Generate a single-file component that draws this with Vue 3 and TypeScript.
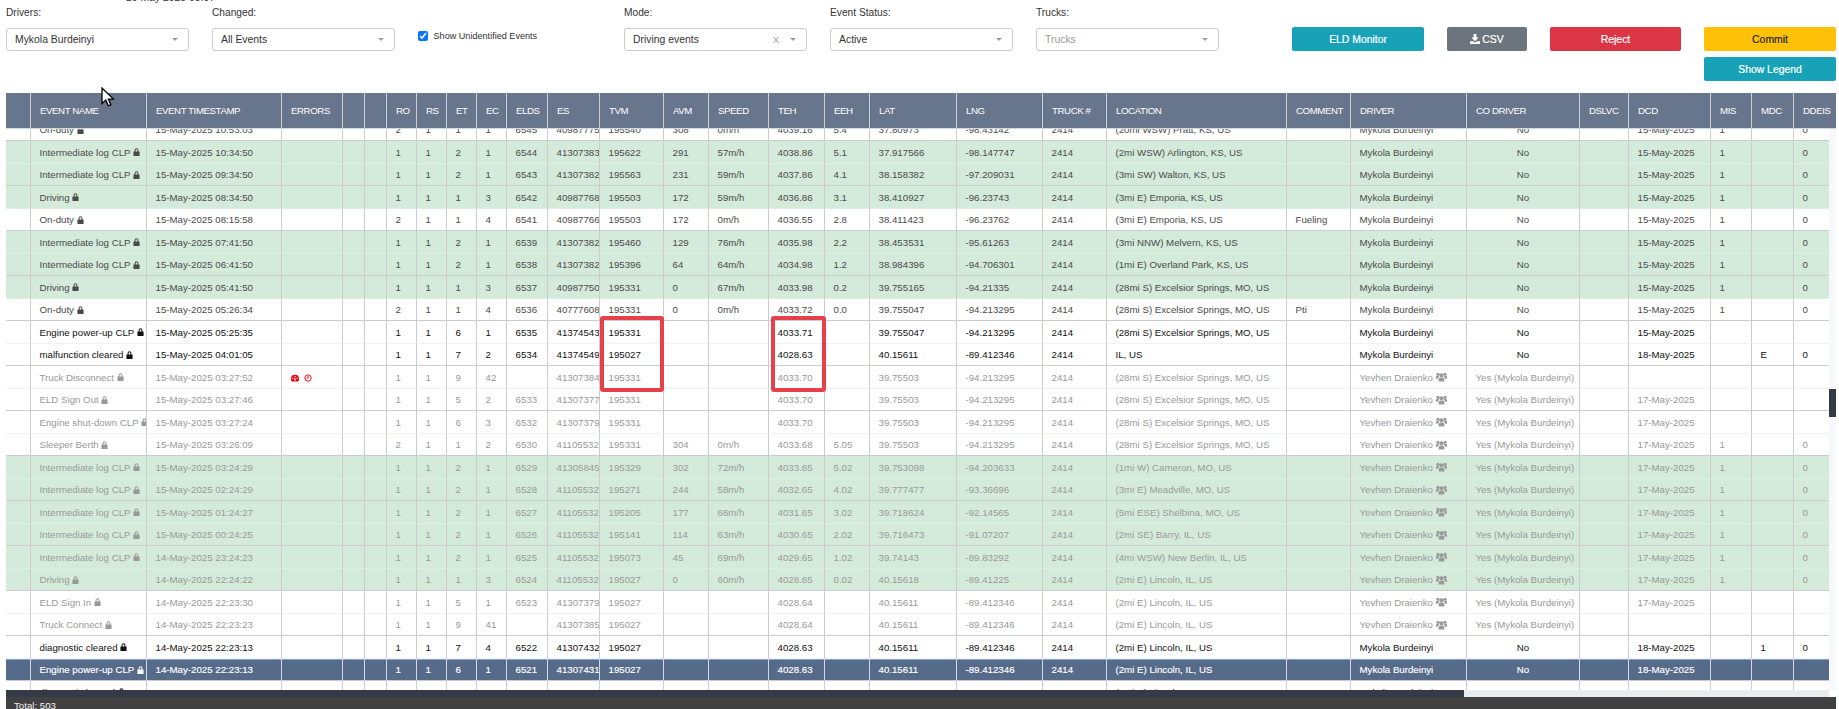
<template>
  <div class="page">
    <span class="report-date">20 May 2025 05:07</span>

    <div class="filters">
      <div class="filter">
        <label class="filter-label">Drivers:</label>
        <div class="select"><span class="select-text">Mykola Burdeinyi</span><i class="caret"></i></div>
      </div>
      <div class="filter">
        <label class="filter-label">Changed:</label>
        <div class="select"><span class="select-text">All Events</span><i class="caret"></i></div>
      </div>
      <div class="filter">
        <label class="check-row"><input type="checkbox" checked class="check" /> Show Unidentified Events</label>
      </div>
      <div class="filter">
        <label class="filter-label">Mode:</label>
        <div class="select">
          <span class="select-text">Driving events</span><span class="clear">X</span><i class="caret"></i>
        </div>
      </div>
      <div class="filter">
        <label class="filter-label">Event Status:</label>
        <div class="select"><span class="select-text">Active</span><i class="caret"></i></div>
      </div>
      <div class="filter">
        <label class="filter-label">Trucks:</label>
        <div class="select"><span class="select-text placeholder">Trucks</span><i class="caret"></i></div>
      </div>

      <div class="actions">
        <button class="btn btn-info eld">ELD Monitor</button>
        <button class="btn btn-gray csv">
          <svg class="dl-icon" viewBox="0 0 14 14"><path d="M5 0h4v5h3L7 10 2 5h3zM0 10h4l3 2 3-2h4v4H0z" /></svg>CSV
        </button>
        <button class="btn btn-red reject">Reject</button>
        <div class="btn-stack">
          <button class="btn btn-yellow">Commit</button>
          <button class="btn btn-info">Show Legend</button>
        </div>
      </div>
    </div>

    <div class="grid">
      <table class="head-table">
        <colgroup>
          <col v-for="(w, i) in headWidths" :key="i" :style="{ width: w + 'px' }" />
        </colgroup>
        <thead>
          <tr>
            <th v-for="(h, i) in headers" :key="i">{{ h }}</th>
          </tr>
        </thead>
      </table>

      <div class="body-wrap">
        <div class="rows">
          <table class="body-table">
            <colgroup>
              <col v-for="(w, i) in bodyWidths" :key="i" :style="{ width: w + 'px' }" />
            </colgroup>
            <tbody>
              <tr v-for="r in rows" :key="r[2] + r[1]" :class="r[0]">
                <td></td>
                <td>
                  {{ r[1] }}
                  <svg class="lock" viewBox="0 0 12 14">
                    <path
                      fill-rule="evenodd"
                      d="M2.6 6V4a3.4 3.4 0 0 1 6.8 0v2h1a1 1 0 0 1 1 1v6a1 1 0 0 1-1 1H1.6a1 1 0 0 1-1-1V7a1 1 0 0 1 1-1zm1.8 0h3.2V4a1.6 1.6 0 0 0-3.2 0z"
                    />
                  </svg>
                </td>
                <td>{{ r[2] }}</td>
                <td>
                  <template v-if="r[1] === 'Truck Disconnect'">
                    <svg class="err-gauge" viewBox="0 0 14 12">
                      <path
                        fill-rule="evenodd"
                        d="M0 7.500a7 7 0 0 1 14 0c0 1.700-.4 3.200-1 4.500H1C.4 10.700 0 9.200 0 7.500zM6 2.600v1.800h2V2.600zM2.300 5.600v1.800h2V5.600zm7.400 0v1.800h2V5.600zM6.200 6l-.6 4.200h2.800L7.800 6z"
                      />
                    </svg>
                    <svg class="err-clock" viewBox="0 0 12 12">
                      <circle cx="6" cy="6" r="4.800" />
                      <path d="M6 3v3.200H3.600" />
                    </svg>
                  </template>
                </td>
                <td></td>
                <td></td>
                <td>{{ r[3] }}</td>
                <td>{{ r[4] }}</td>
                <td>{{ r[5] }}</td>
                <td>{{ r[6] }}</td>
                <td>{{ r[7] }}</td>
                <td>{{ r[8] }}</td>
                <td>{{ r[9] }}</td>
                <td>{{ r[10] }}</td>
                <td>{{ r[11] }}</td>
                <td>{{ r[12] }}</td>
                <td>{{ r[13] }}</td>
                <td>{{ r[14] }}</td>
                <td>{{ r[15] }}</td>
                <td>2414</td>
                <td>{{ r[16] }}</td>
                <td>{{ r[17] }}</td>
                <td>
                  {{ r[18] }}
                  <svg v-if="r[19] !== 'No'" class="users" viewBox="0 0 16 14">
                    <circle cx="8" cy="4.400" r="2.900" />
                    <circle cx="2.900" cy="3" r="2.300" />
                    <circle cx="13.100" cy="3" r="2.300" />
                    <path d="M3.800 13.500v-3c0-1.800 1.300-2.900 2.700-2.900h3c1.400 0 2.700 1.100 2.700 2.900v3z" />
                    <path d="M0 9.600V7c0-1 .7-1.800 1.800-1.800h2.100c.2.900.6 1.500 1.200 1.900-1.500.4-2.400 1.300-2.700 2.500zM16 9.600V7c0-1-.7-1.800-1.800-1.800h-2.100c-.2.900-.6 1.500-1.200 1.900 1.500.4 2.400 1.300 2.700 2.500z" />
                  </svg>
                </td>
                <td :class="{ center: r[19] === 'No' }">{{ r[19] }}</td>
                <td></td>
                <td>{{ r[20] }}</td>
                <td>{{ r[21] }}</td>
                <td>{{ r[22] }}</td>
                <td>{{ r[23] }}</td>
              </tr>
            </tbody>
          </table>
        </div>
        <div class="vscroll"><div class="vthumb"></div></div>
      </div>

      <!-- review marks drawn over the table -->
      <div class="mark mark-tvm"></div>
      <div class="mark mark-teh"></div>
    </div>

    <div class="hscroll"><div class="hthumb"></div><div class="htrack"></div></div>
    <div class="footer">Total: 503</div>

    <svg class="cursor" viewBox="0 0 14 20">
      <path d="M1 1v15.500l3.800-3.500 2.500 5.800 2.600-1.100-2.500-5.600h5.100z" />
    </svg>
  </div>
</template>

<script setup lang="ts">
type Row = [string, ...string[]]

const headers = [
  '', 'EVENT NAME', 'EVENT TIMESTAMP', 'ERRORS', '', '', 'RO', 'RS', 'ET', 'EC', 'ELDS', 'ES', 'TVM', 'AVM',
  'SPEED', 'TEH', 'EEH', 'LAT', 'LNG', 'TRUCK #', 'LOCATION', 'COMMENT', 'DRIVER', 'CO DRIVER', 'DSLVC', 'DCD',
  'MIS', 'MDC', 'DDEIS',
]

const bodyWidths = [
  25, 116, 135, 61, 22, 22, 30, 30, 30, 30, 41, 52, 64, 45, 60, 56, 45, 87, 86, 64, 180, 64, 116, 113, 49, 82, 41,
  42, 35,
]
const headWidths = [...bodyWidths.slice(0, -1), 42]

const MB = 'Mykola Burdeinyi'
const YD = 'Yevhen Draienko'
const YM = 'Yes (Mykola Burdeinyi)'
const EXC = '(28mi S) Excelsior Springs, MO, US'
const LIN = '(2mi E) Lincoln, IL, US'
const ILOG = 'Intermediate log CLP'

// class, name, time, ro, rs, et, ec, elds, es, tvm, avm, speed, teh, eeh, lat, lng, location, comment, driver, co, dcd, mis, mdc, ddeis
const rows: Row[] = [
  ['', 'On-duty', '15-May-2025 10:53:03', '2', '1', '1', '1', '6545', '40987775', '195540', '308', '0m/h', '4039.16', '5.4', '37.80973', '-98.43142', '(20mi WSW) Pratt, KS, US', '', MB, 'No', '15-May-2025', '1', '', '0'],
  ['green', ILOG, '15-May-2025 10:34:50', '1', '1', '2', '1', '6544', '41307383', '195622', '291', '57m/h', '4038.86', '5.1', '37.917566', '-98.147747', '(2mi WSW) Arlington, KS, US', '', MB, 'No', '15-May-2025', '1', '', '0'],
  ['green', ILOG, '15-May-2025 09:34:50', '1', '1', '2', '1', '6543', '41307382', '195563', '231', '59m/h', '4037.86', '4.1', '38.158382', '-97.209031', '(3mi SW) Walton, KS, US', '', MB, 'No', '15-May-2025', '1', '', '0'],
  ['green', 'Driving', '15-May-2025 08:34:50', '1', '1', '1', '3', '6542', '40987768', '195503', '172', '59m/h', '4036.86', '3.1', '38.410927', '-96.23743', '(3mi E) Emporia, KS, US', '', MB, 'No', '15-May-2025', '1', '', '0'],
  ['', 'On-duty', '15-May-2025 08:15:58', '2', '1', '1', '4', '6541', '40987766', '195503', '172', '0m/h', '4036.55', '2.8', '38.411423', '-96.23762', '(3mi E) Emporia, KS, US', 'Fueling', MB, 'No', '15-May-2025', '1', '', '0'],
  ['green', ILOG, '15-May-2025 07:41:50', '1', '1', '2', '1', '6539', '41307382', '195460', '129', '76m/h', '4035.98', '2.2', '38.453531', '-95.61263', '(3mi NNW) Melvern, KS, US', '', MB, 'No', '15-May-2025', '1', '', '0'],
  ['green', ILOG, '15-May-2025 06:41:50', '1', '1', '2', '1', '6538', '41307382', '195396', '64', '64m/h', '4034.98', '1.2', '38.984396', '-94.706301', '(1mi E) Overland Park, KS, US', '', MB, 'No', '15-May-2025', '1', '', '0'],
  ['green', 'Driving', '15-May-2025 05:41:50', '1', '1', '1', '3', '6537', '40987750', '195331', '0', '67m/h', '4033.98', '0.2', '39.755165', '-94.21335', EXC, '', MB, 'No', '15-May-2025', '1', '', '0'],
  ['', 'On-duty', '15-May-2025 05:26:34', '2', '1', '1', '4', '6536', '40777608', '195331', '0', '0m/h', '4033.72', '0.0', '39.755047', '-94.213295', EXC, 'Pti', MB, 'No', '15-May-2025', '1', '', '0'],
  ['strong', 'Engine power-up CLP', '15-May-2025 05:25:35', '1', '1', '6', '1', '6535', '41374543', '195331', '', '', '4033.71', '', '39.755047', '-94.213295', EXC, '', MB, 'No', '15-May-2025', '', '', ''],
  ['strong', 'malfunction cleared', '15-May-2025 04:01:05', '1', '1', '7', '2', '6534', '41374549', '195027', '', '', '4028.63', '', '40.15611', '-89.412346', 'IL, US', '', MB, 'No', '18-May-2025', '', 'E', '0'],
  ['dim', 'Truck Disconnect', '15-May-2025 03:27:52', '1', '1', '9', '42', '', '41307384', '195331', '', '', '4033.70', '', '39.75503', '-94.213295', EXC, '', YD, YM, '', '', '', ''],
  ['dim', 'ELD Sign Out', '15-May-2025 03:27:46', '1', '1', '5', '2', '6533', '41307377', '195331', '', '', '4033.70', '', '39.75503', '-94.213295', EXC, '', YD, YM, '17-May-2025', '', '', ''],
  ['dim', 'Engine shut-down CLP', '15-May-2025 03:27:24', '1', '1', '6', '3', '6532', '41307379', '195331', '', '', '4033.70', '', '39.75503', '-94.213295', EXC, '', YD, YM, '17-May-2025', '', '', ''],
  ['dim', 'Sleeper Berth', '15-May-2025 03:26:09', '2', '1', '1', '2', '6530', '41105532', '195331', '304', '0m/h', '4033.68', '5.05', '39.75503', '-94.213295', EXC, '', YD, YM, '17-May-2025', '1', '', '0'],
  ['green dim', ILOG, '15-May-2025 03:24:29', '1', '1', '2', '1', '6529', '41305845', '195329', '302', '72m/h', '4033.65', '5.02', '39.753098', '-94.203633', '(1mi W) Cameron, MO, US', '', YD, YM, '17-May-2025', '1', '', '0'],
  ['green dim', ILOG, '15-May-2025 02:24:29', '1', '1', '2', '1', '6528', '41105532', '195271', '244', '58m/h', '4032.65', '4.02', '39.777477', '-93.36696', '(3mi E) Meadville, MO, US', '', YD, YM, '17-May-2025', '1', '', '0'],
  ['green dim', ILOG, '15-May-2025 01:24:27', '1', '1', '2', '1', '6527', '41105532', '195205', '177', '66m/h', '4031.65', '3.02', '39.718624', '-92.14565', '(5mi ESE) Shelbina, MO, US', '', YD, YM, '17-May-2025', '1', '', '0'],
  ['green dim', ILOG, '15-May-2025 00:24:25', '1', '1', '2', '1', '6526', '41105532', '195141', '114', '63m/h', '4030.65', '2.02', '39.716473', '-91.07207', '(2mi SE) Barry, IL, US', '', YD, YM, '17-May-2025', '1', '', '0'],
  ['green dim', ILOG, '14-May-2025 23:24:23', '1', '1', '2', '1', '6525', '41105532', '195073', '45', '69m/h', '4029.65', '1.02', '39.74143', '-89.83292', '(4mi WSW) New Berlin, IL, US', '', YD, YM, '17-May-2025', '1', '', '0'],
  ['green dim', 'Driving', '14-May-2025 22:24:22', '1', '1', '1', '3', '6524', '41105532', '195027', '0', '60m/h', '4028.65', '0.02', '40.15618', '-89.41225', LIN, '', YD, YM, '17-May-2025', '1', '', '0'],
  ['dim', 'ELD Sign In', '14-May-2025 22:23:30', '1', '1', '5', '1', '6523', '41307379', '195027', '', '', '4028.64', '', '40.15611', '-89.412346', LIN, '', YD, YM, '17-May-2025', '', '', ''],
  ['dim', 'Truck Connect', '14-May-2025 22:23:23', '1', '1', '9', '41', '', '41307385', '195027', '', '', '4028.64', '', '40.15611', '-89.412346', LIN, '', YD, YM, '', '', '', ''],
  ['strong', 'diagnostic cleared', '14-May-2025 22:23:13', '1', '1', '7', '4', '6522', '41307432', '195027', '', '', '4028.63', '', '40.15611', '-89.412346', LIN, '', MB, 'No', '18-May-2025', '', '1', '0'],
  ['selected', 'Engine power-up CLP', '14-May-2025 22:23:13', '1', '1', '6', '1', '6521', '41307431', '195027', '', '', '4028.63', '', '40.15611', '-89.412346', LIN, '', MB, 'No', '18-May-2025', '', '', ''],
  ['strong', 'diagnostic logged', '14-May-2025 22:23:05', '1', '1', '7', '3', '6520', '41307430', '195027', '', '', '4028.63', '', '40.15611', '-89.412346', LIN, '', MB, 'No', '18-May-2025', '', '1', '0'],
]
</script>

<style>
html,
body {
  margin: 0;
  overflow: hidden;
  background: #fff;
}
</style>

<style scoped>
.page {
  position: relative;
  display: flex;
  flex-direction: column;
  height: 709px;
  padding: 0 3px 0 6px;
  box-sizing: border-box;
  overflow: hidden;
  font-family: 'Liberation Sans', Arial, sans-serif;
  color: #333;
}

.report-date {
  position: absolute;
  left: 126px;
  top: -8px;
  font-size: 10.400px;
  line-height: 12px;
}

/* top filter bar */
.filters {
  display: flex;
  flex: none;
  height: 93px;
  box-sizing: border-box;
  padding-top: 7px;
}

.filter {
  width: 183px;
  margin-right: 23px;
  flex: none;
}

.filter-label {
  display: block;
  height: 12px;
  margin-bottom: 9px;
  font-size: 10.200px;
  line-height: 12px;
  color: #333;
}

.select {
  display: flex;
  align-items: center;
  height: 23px;
  box-sizing: border-box;
  padding: 0 10px 0 8px;
  border: 1px solid #ccc;
  border-radius: 3px;
  background: #fff;
  font-size: 10.400px;
}

.select-text {
  flex: 1;
}

.placeholder {
  color: #999;
}

.clear {
  margin-right: 11px;
  font-size: 9px;
  color: #999;
}

.caret {
  width: 0;
  height: 0;
  border-left: 3px solid transparent;
  border-right: 3px solid transparent;
  border-top: 3px solid #999;
}

.check-row {
  display: flex;
  align-items: center;
  margin-top: 24px;
  font-size: 9.100px;
  line-height: 10px;
  white-space: pre;
}

.check {
  width: 10px;
  height: 10px;
  margin: 0 3px 0 0;
}

.actions {
  display: flex;
  padding-top: 20px;
  margin-left: 50px;
}

.btn {
  display: block;
  height: 24px;
  padding: 0;
  border: 0;
  border-radius: 2px;
  font-family: inherit;
  font-size: 10.400px;
  color: #fff;
  -webkit-text-stroke: 0.2px currentColor;
}

.btn-info {
  background: #17a2b8;
}

.btn-gray {
  background: #6c757d;
}

.btn-red {
  background: #dc3545;
}

.btn-yellow {
  background: #ffc107;
  color: #212529;
}

.eld {
  width: 132px;
  margin-right: 23px;
}

.csv {
  width: 80px;
  margin-right: 23px;
}

.reject {
  width: 131px;
  margin-right: 23px;
}

.btn-stack {
  display: flex;
  flex-direction: column;
  gap: 6px;
  width: 132px;
}

.btn-stack .btn {
  width: 100%;
}

.dl-icon {
  width: 10px;
  height: 10px;
  margin-right: 2px;
  fill: #fff;
  vertical-align: -1px;
}

/* event table */
.grid {
  position: relative;
  display: flex;
  flex-direction: column;
  flex: none;
}

table {
  border-collapse: separate;
  border-spacing: 0;
  table-layout: fixed;
}

.head-table {
  position: relative;
  z-index: 1;
  width: 1830px;
  flex: none;
}

th {
  height: 36px;
  padding: 0 0 0 9px;
  box-sizing: border-box;
  background: #67758d;
  border-right: 1px solid #cdd2da;
  border-bottom: 1px solid #d3d7de;
  color: #fff;
  font-size: 9.700px;
  letter-spacing: -0.420px;
  font-weight: 400;
  text-align: left;
  white-space: nowrap;
  overflow: hidden;
}

th:last-child {
  border-right: 0;
}

.body-wrap {
  display: flex;
  height: 561px;
}

.rows {
  width: 1823px;
  overflow: hidden;
}

.body-table {
  width: 1823px;
  margin-top: -10px;
}

.vscroll {
  width: 7px;
  flex: none;
  background: #f6f8fa;
}

.vthumb {
  height: 28px;
  margin-top: 260px;
  background: #343a46;
}

td {
  padding: 0 0 0 8.500px;
  box-sizing: border-box;
  border-right: 1px solid #ccc;
  font-size: 9.700px;
  white-space: nowrap;
  overflow: hidden;
  color: #4a4a4a;
}

td:last-child {
  border-right: 0;
}

tr:nth-child(odd) td {
  height: 22px;
  border-bottom: 1px solid #ccc;
}

tr:nth-child(even) td {
  height: 23px;
  border-bottom: 1px solid #f1f1f1;
}

tr.green td {
  background: #d4ebdb;
}

tr.green:nth-child(even) td {
  border-bottom-color: #dcefe2;
}

tr.strong td {
  color: #111;
}

tr.dim td {
  color: #999;
}

tr.selected td {
  background: #566a8a;
  color: #fff;
  border-right-color: #d5dae2;
  box-shadow: inset 0 1px 0 #88a9d6;
  -webkit-text-stroke: 0.15px #fff;
}

td.center {
  padding-left: 0;
  text-align: center;
}

.lock {
  width: 7px;
  height: 8px;
  fill: currentColor;
  vertical-align: -0.500px;
}

.users {
  width: 11px;
  height: 10px;
  fill: #999;
  vertical-align: -1.500px;
}

.err-gauge {
  width: 8px;
  height: 8px;
  fill: #e8000b;
  vertical-align: -1px;
}

.err-clock {
  width: 8px;
  height: 8px;
  margin-left: 5px;
  fill: none;
  stroke: #e8000b;
  stroke-width: 1.400;
  vertical-align: -1px;
}

.mark {
  position: absolute;
  top: 223px;
  height: 76px;
  box-sizing: border-box;
  border: 4px solid #e8404a;
  border-radius: 3px;
}

.mark-tvm {
  left: 594px;
  width: 64px;
}

.mark-teh {
  left: 765px;
  width: 55px;
}

/* bottom scrollbar and total */
.hscroll {
  display: flex;
  flex: none;
  height: 7px;
  padding-right: 7px;
}

.hthumb {
  width: 1458px;
  background: #343a46;
}

.htrack {
  flex: 1;
  background: #e9ecef;
}

.footer {
  flex: 1;
  padding: 3px 0 0 8px;
  background: #414141;
  color: #f1f1f1;
  font-size: 9.700px;
  line-height: 12px;
}

.cursor {
  position: absolute;
  z-index: 2;
  left: 101px;
  top: 87px;
  width: 14px;
  height: 20px;
  fill: #fff;
  stroke: #000;
  stroke-width: 1.300;
}
</style>
